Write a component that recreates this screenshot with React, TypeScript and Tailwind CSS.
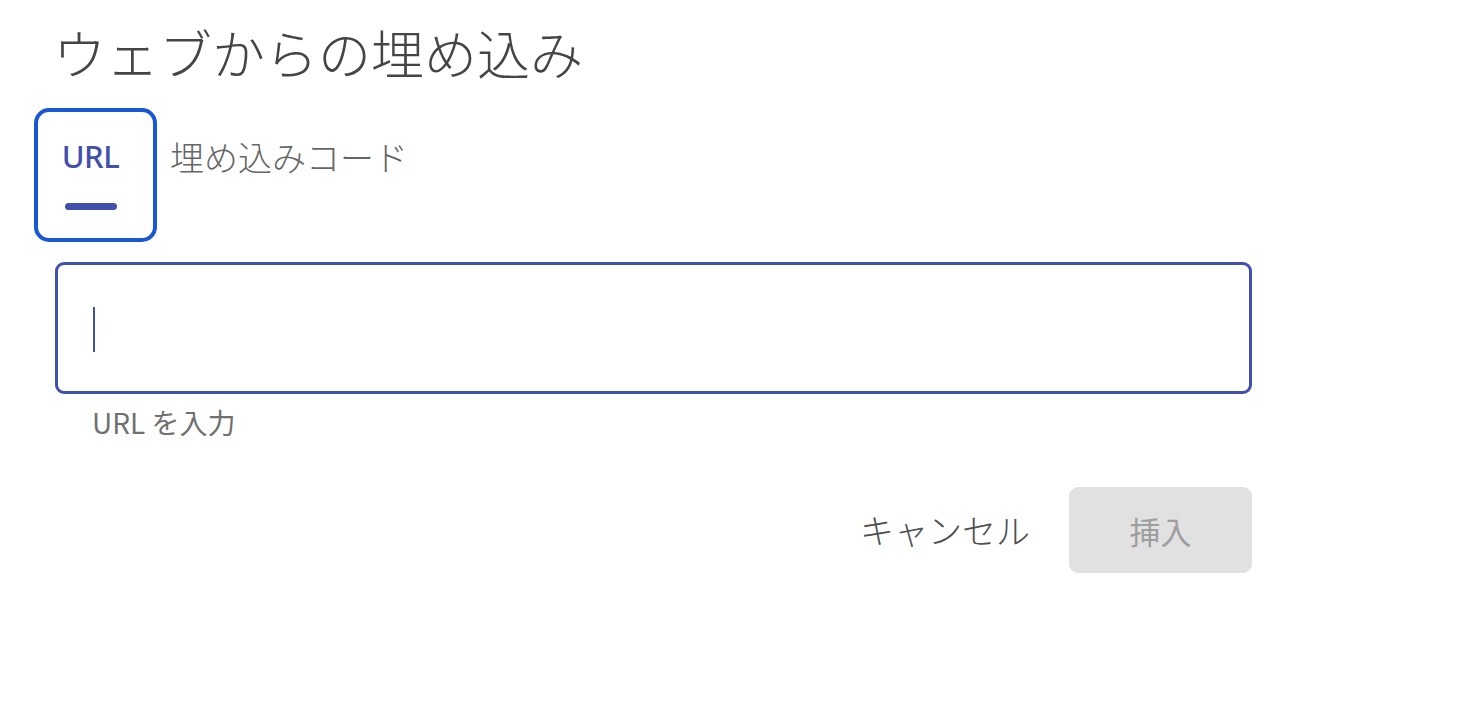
import React from 'react'

const jp = { fontFamily: '"Noto Sans CJK JP", "Noto Sans", sans-serif' }

export default function App() {
  return (
    <div className="w-[1460px] h-[725px] bg-white pl-[55px] pt-[26px]" style={jp}>
      {/* Title */}
      <h1 className="-ml-[2px] text-[53px] leading-none font-light text-[#454545]">
        ウェブからの埋め込み
      </h1>

      {/* Tabs */}
      <div className="mt-[29px] -ml-[21px] flex items-start">
        <div className="w-[123px] h-[134px] rounded-[15px] border-[4px] border-[#1858d4] flex flex-col items-center pr-[10px]">
          <span className="mt-[29px] text-[31px] leading-none font-medium text-[#4150ad] tracking-[-0.5px]" style={{ fontFamily: '"Noto Sans", "Noto Sans CJK JP", sans-serif' }}>
            URL
          </span>
          <span className="mt-[31px] w-[52px] h-[7px] rounded-full bg-[#4150ad]" />
        </div>
        <span className="ml-[13px] mt-[32px] text-[34px] leading-none font-light text-[#666666]">
          埋め込みコード
        </span>
      </div>

      {/* URL input */}
      <div className="mt-[20px] w-[1197px] h-[132px] rounded-[9px] border-[3px] border-[#4150ad] flex items-center pl-[35px]">
        <span className="mt-[3px] w-[2px] h-[45px] bg-[#4150ad]" />
      </div>
      <p className="mt-[14px] ml-[37px] text-[28px] leading-none text-[#707070]">URL を入力</p>

      {/* Actions */}
      <div className="mt-[51px] w-[1197px] flex items-center justify-end">
        <button className="mr-[39px] text-[34px] leading-none font-light text-[#505050]">キャンセル</button>
        <button className="w-[183px] h-[86px] rounded-[9px] bg-[#e1e1e1] text-[31px] leading-none text-[#9e9e9e] flex items-center justify-center">
          挿入
        </button>
      </div>
    </div>
  )
}
